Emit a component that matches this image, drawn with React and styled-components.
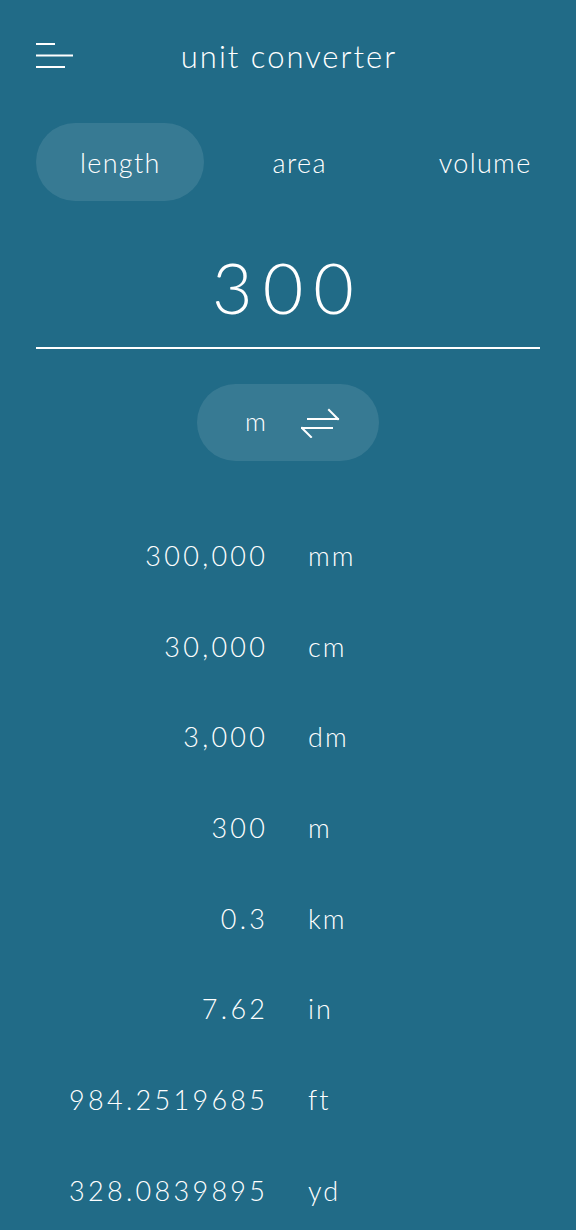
import React, { useState } from "react";
import styled, { createGlobalStyle } from "styled-components";

const Global = createGlobalStyle`
  html, body { margin: 0; padding: 0; background: #216b87; }
  body {
    font-family: "Lato", "Noto Sans", sans-serif;
    font-weight: 300;
    color: #ffffff;
    -webkit-font-smoothing: antialiased;
  }
  * { box-sizing: border-box; }
`;

const Page = styled.div`
  width: 576px;
  height: 1230px;
  background: #216b87;
  padding: 0 36px;
  overflow: hidden;
`;

const Header = styled.header`
  height: 114px;
  display: grid;
  grid-template-columns: 1fr auto 1fr;
  align-items: center;
  padding-bottom: 2px;
`;

const Title = styled.h1`
  margin: 0;
  font-size: 31px;
  font-weight: 300;
  letter-spacing: 2px;
  margin-right: -2px;
`;

const MenuButton = styled.button`
  background: none;
  border: 0;
  padding: 0;
  width: 38px;
  height: 26px;
  cursor: pointer;
  display: flex;
`;

const Tabs = styled.nav`
  display: flex;
  gap: 25px;
  height: 78px;
  margin-top: 9px;
  white-space: nowrap;
`;

const Tab = styled.button`
  border: 0;
  height: 78px;
  padding: 0 43px 0 44px;
  border-radius: 39px;
  background: ${(p) => (p.$active ? "rgba(255,255,255,0.1)" : "transparent")};
  color: #ffffff;
  font-family: inherit;
  font-weight: 300;
  font-size: 27px;
  letter-spacing: 1.3px;
  flex-shrink: 0;
  cursor: pointer;
`;

const InputWrap = styled.div`
  margin-top: 50px;
  height: 98px;
  border-bottom: 2px solid #ffffff;
  display: flex;
  justify-content: center;
`;

const BigValue = styled.div`
  font-size: 70px;
  line-height: 72px;
  font-weight: 300;
  letter-spacing: 10px;
`;

const UnitRow = styled.div`
  display: flex;
  justify-content: center;
  margin-top: 35px;
`;

const UnitPill = styled.button`
  width: 182px;
  height: 77px;
  border: 0;
  border-radius: 39px;
  background: rgba(255, 255, 255, 0.1);
  color: #ffffff;
  font-family: inherit;
  font-weight: 300;
  font-size: 26px;
  display: flex;
  align-items: center;
  justify-content: center;
  gap: 34px;
  padding: 0 0 0 10px;
  cursor: pointer;
`;

const UnitLabel = styled.span`
  margin-top: -4px;
  letter-spacing: 1px;
`;

const List = styled.ul`
  list-style: none;
  margin: 49px 0 0;
  padding: 0;
`;

const Row = styled.li`
  height: 90.7px;
  display: grid;
  grid-template-columns: 229px 1fr;
  column-gap: 43px;
  align-items: center;
  font-size: 27px;
`;

const Value = styled.span`
  text-align: right;
  letter-spacing: 3.3px;
  margin-right: -3.3px;
`;

const Unit = styled.span`
  letter-spacing: 2px;
`;

const MenuIcon = () => (
  <svg width="38" height="26" viewBox="0 0 38 26" fill="none" stroke="#fff" strokeWidth="2">
    <line x1="0" y1="1" x2="19" y2="1" />
    <line x1="0" y1="12.5" x2="37" y2="12.5" />
    <line x1="0" y1="24" x2="29" y2="24" />
  </svg>
);

const SwapIcon = () => (
  <svg width="40" height="30" viewBox="0 0 40 30" fill="none" stroke="#fff" strokeWidth="2" strokeLinecap="square">
    <line x1="7" y1="11" x2="37" y2="11" />
    <line x1="28" y1="2" x2="37" y2="11" />
    <line x1="1" y1="20" x2="31" y2="20" />
    <line x1="1" y1="20" x2="10" y2="29" />
  </svg>
);

const results = [
  ["300,000", "mm"],
  ["30,000", "cm"],
  ["3,000", "dm"],
  ["300", "m"],
  ["0.3", "km"],
  ["7.62", "in"],
  ["984.2519685", "ft"],
  ["328.0839895", "yd"],
];

export default function App() {
  const [tab, setTab] = useState("length");
  return (
    <>
      <Global />
      <Page>
        <Header>
          <MenuButton aria-label="menu">
            <MenuIcon />
          </MenuButton>
          <Title>unit converter</Title>
          <span />
        </Header>
        <Tabs>
          {["length", "area", "volume"].map((t) => (
            <Tab key={t} $active={tab === t} onClick={() => setTab(t)}>
              {t}
            </Tab>
          ))}
        </Tabs>
        <InputWrap>
          <BigValue>300</BigValue>
        </InputWrap>
        <UnitRow>
          <UnitPill>
            <UnitLabel>m</UnitLabel>
            <SwapIcon />
          </UnitPill>
        </UnitRow>
        <List>
          {results.map(([v, u]) => (
            <Row key={u}>
              <Value>{v}</Value>
              <Unit>{u}</Unit>
            </Row>
          ))}
        </List>
      </Page>
    </>
  );
}
